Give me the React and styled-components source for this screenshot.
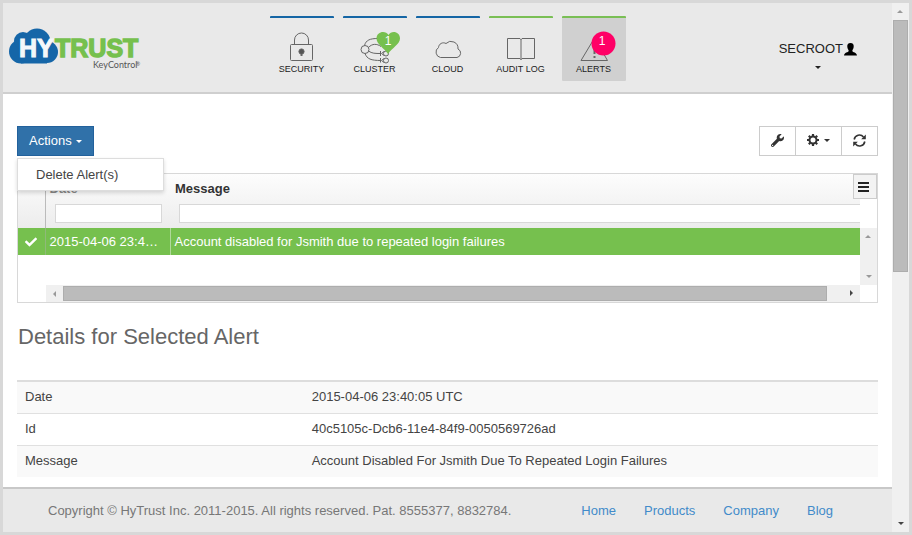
import styled, { createGlobalStyle } from "styled-components";
import { FaCheck, FaWrench } from "react-icons/fa";

const tabs = [
    { label: "SECURITY", color: "#1566a5", Icon: LockIcon },
    { label: "CLUSTER", color: "#1566a5", Icon: ClusterIcon },
    { label: "CLOUD", color: "#1566a5", Icon: CloudIcon },
    { label: "AUDIT LOG", color: "#7abf55", Icon: BookIcon },
    { label: "ALERTS", color: "#7abf55", Icon: AlertIcon, active: true },
];

const details = [
    ["Date", "2015-04-06 23:40:05 UTC"],
    ["Id", "40c5105c-Dcb6-11e4-84f9-0050569726ad"],
    ["Message", "Account Disabled For Jsmith Due To Repeated Login Failures"],
];

const links = ["Home", "Products", "Company", "Blog"];

export default function App(){
    return(
        <>
            <GlobalStyle />
            <Frame>
                <Page>
                    <Header>
                        <Logo />
                        <Nav>
                            {tabs.map(({ label, color, Icon, active }) => (
                                <Tab href="#" key={label} $color={color} $active={active}>
                                    <Icon />
                                    <span>{label}</span>
                                </Tab>
                            ))}
                        </Nav>
                        <UserMenu>
                            <UserName>SECROOT <UserIcon /></UserName>
                            <Caret />
                        </UserMenu>
                    </Header>
                    <Main>
                        <Toolbar>
                            <Dropdown>
                                <ActionsButton>Actions <Caret /></ActionsButton>
                                <Menu>
                                    <MenuItem>Delete Alert(s)</MenuItem>
                                </Menu>
                            </Dropdown>
                            <ButtonGroup>
                                <ToolButton aria-label="Tools"><FaWrench size={13} /></ToolButton>
                                <ToolButton aria-label="Settings"><GearIcon /><Caret /></ToolButton>
                                <ToolButton aria-label="Refresh"><RefreshIcon /></ToolButton>
                            </ButtonGroup>
                        </Toolbar>
                        <AlertsGrid />
                        <Title>Details for Selected Alert</Title>
                        <DetailsTable>
                            <tbody>
                                {details.map(([name, value]) => (
                                    <tr key={name}>
                                        <th scope="row">{name}</th>
                                        <td>{value}</td>
                                    </tr>
                                ))}
                            </tbody>
                        </DetailsTable>
                    </Main>
                    <Footer>
                        <span>Copyright © HyTrust Inc. 2011-2015. All rights reserved. Pat. 8555377, 8832784.</span>
                        <FooterLinks>
                            {links.map((link) => <a href="#" key={link}>{link}</a>)}
                        </FooterLinks>
                    </Footer>
                </Page>
                <PageScroll>
                    <Arrow $dir="up" />
                    <Track><Thumb $size="51%" /></Track>
                    <Arrow $dir="down" $dark />
                </PageScroll>
            </Frame>
        </>
    );
}

function AlertsGrid(){
    return(
        <GridBox>
            <GridBody>
                <GridTable>
                    <thead>
                        <tr>
                            <CheckHead />
                            <DateHead>
                                <label htmlFor="date">Date</label>
                                <Filter id="date" />
                            </DateHead>
                            <MessageHead>
                                <label htmlFor="message">Message</label>
                                <Filter id="message" $open />
                            </MessageHead>
                        </tr>
                    </thead>
                    <tbody>
                        <tr>
                            <CheckCell><FaCheck size={12} /></CheckCell>
                            <Cell>2015-04-06 23:40:05 UTC</Cell>
                            <Cell>Account disabled for Jsmith due to repeated login failures</Cell>
                        </tr>
                    </tbody>
                </GridTable>
                <GridSide>
                    <SideScroll>
                        <Arrow $dir="up" />
                        <Arrow $dir="down" />
                    </SideScroll>
                </GridSide>
            </GridBody>
            <BottomScroll>
                <Arrow $dir="left" />
                <Track $row><Thumb $row $size="98%" /></Track>
                <Arrow $dir="right" $dark />
            </BottomScroll>
            <ColumnsButton aria-label="Columns">
                <svg width="11" height="10" stroke="#222" strokeWidth="2">
                    <path d="M0 1H11M0 5H11M0 9H11" />
                </svg>
            </ColumnsButton>
        </GridBox>
    );
}

function Logo(){
    return(
        <LogoLink href="#" aria-label="HyTrust KeyControl">
            <svg width="134" height="43" viewBox="9 28 134 43">
                <g fill="#1566a8">
                    <circle cx="21" cy="51.5" r="12" />
                    <circle cx="23" cy="41" r="9" />
                    <circle cx="37" cy="42" r="13.5" />
                    <circle cx="47" cy="52" r="11" />
                    <path d="M21 45H47V63.5H21Z" />
                </g>
                <g fontFamily="Liberation Sans, Arial, sans-serif" fontWeight="700" fontSize="25">
                    <text x="19" y="57" fill="#f4f7fa" stroke="#f4f7fa">HY</text>
                    <text x="55" y="57" fill="#76c04e" stroke="#76c04e" strokeWidth="1.4">TRUST</text>
                </g>
                <g fill="#555" fontFamily="Lato, sans-serif">
                    <text x="93" y="68" fontSize="9">KeyControl</text>
                    <text x="136" y="66" fontSize="5">®</text>
                </g>
            </svg>
        </LogoLink>
    );
}

function LockIcon(){
    return(
        <TabIcon viewBox="0 0 64 32">
            <rect x="20.5" y="14.5" width="22" height="16" rx="1" />
            <path d="M24.5 14V10a7 7 0 0 1 14 0v4" />
            <path d="M31.5 19v7" strokeWidth="2" />
            <circle cx="31.5" cy="21.5" r="2.6" fill="#555" />
        </TabIcon>
    );
}

function ClusterIcon(){
    return(
        <TabIcon viewBox="0 0 64 32">
            <circle cx="22" cy="19.5" r="4" />
            <path d="M21.5 15.5C23 10 27 8.5 35 8.5M25.5 17.5C29 13.5 34 13.5 38 16.5M25.5 21C29 23.5 32 23.5 38 23.5M22 23.5C24 29 28 30.5 38 30.5" />
            <path d="M37.5 21V26M37.5 28V32.5M41 21.5L38.5 23.5L41 25.500M41 28.500L38.5 30.5L41 32.500" />
            <circle cx="43" cy="23.5" r="2.500" />
            <circle cx="43" cy="30.5" r="2.500" />
            <path d="M45 24C41 18 33.500 14 33.500 8.500C33.500 1 43 0 45.500 5C48 0 57 1 57 8.500C57 14 49 18 45 24Z" fill="#76c04e" stroke="none" />
            <BadgeText x="45" y="15">1</BadgeText>
        </TabIcon>
    );
}

function CloudIcon(){
    return(
        <TabIcon viewBox="0 0 64 32">
            <path d="M24.5 27.5A5.500 5.500 0 0 1 22.5 17.5A5 5 0 0 1 30 13.5A7 7 0 0 1 42 19A4.500 4.500 0 0 1 41 27.5Z" />
        </TabIcon>
    );
}

function BookIcon(){
    return(
        <TabIcon viewBox="0 0 64 32">
            <path d="M32 9.5L31 8.5H18.5V28.5H31L32 29.5L33 28.5H45.5V8.5H33ZM32 9V30" />
        </TabIcon>
    );
}

function AlertIcon(){
    return(
        <TabIcon viewBox="0 0 64 32">
            <path d="M32.5 8L19 30.5H45.5Z" />
            <path d="M32.5 15V24M32.5 26V28" strokeWidth="2" />
            <circle cx="41.500" cy="13.500" r="12" fill="#ff0066" stroke="none" />
            <BadgeText x="40" y="15">1</BadgeText>
        </TabIcon>
    );
}

function UserIcon(){
    return(
        <svg width="13" height="13" viewBox="0 0 13 13">
            <path d="M6.5 0C8.9 0 9.9 1.5 9.700 3.800C9.600 5.500 9 6.300 8.400 7.200V8.300C8.700 9.300 12.700 9.500 13 12.500H0C.3 9.500 4.300 9.300 4.600 8.300V7.200C4 6.300 3.400 5.500 3.300 3.800C3.100 1.500 4.100 0 6.500 0Z" />
        </svg>
    );
}

function GearIcon(){
    return(
        <svg width="12" height="12" viewBox="0 0 12 12" fill="none" stroke="#333">
            <circle cx="6" cy="6" r="3.500" strokeWidth="2" />
            <path d="M6 0V2M6 10V12M0 6H2M10 6H12M1.800 1.800L3.200 3.200M8.800 8.800L10.200 10.200M1.800 10.200L3.200 8.800M8.800 3.200L10.200 1.800" strokeWidth="2.200" />
        </svg>
    );
}

function RefreshIcon(){
    return(
        <svg width="13" height="13" viewBox="0 0 13 13" fill="none" stroke="#333" strokeWidth="1.600">
            <path d="M1.200 5.500A5.300 5.300 0 0 1 10.500 3M11.800 7.500A5.300 5.300 0 0 1 2.500 10" />
            <path d="M12.800 .5V5.200H8.200ZM.2 12.500V7.800H4.800Z" fill="#333" stroke="none" />
        </svg>
    );
}

const GlobalStyle = createGlobalStyle`
    * {
        box-sizing: border-box;
    }
    body {
        margin: 0;
        font-family: "Liberation Sans", Arial, sans-serif;
        font-size: 13px;
        line-height: 18px;
        color: #444;
    }
    button, input {
        font: inherit;
        color: inherit;
    }
`

const Frame = styled.div`
    display: flex;
    min-height: 100vh;
    border: 3px solid #d8d8d8;
    background: #fff;
`

const Page = styled.div`
    flex: 1;
    min-width: 0;
    display: flex;
    flex-direction: column;
`

const Header = styled.header`
    display: grid;
    grid-template-columns: 1fr auto 1fr;
    align-items: start;
    padding: 13px 6px 11px;
    background: #e9e9e9;
    border-bottom: 2px solid #cfcfcf;
`

const LogoLink = styled.a`
    padding-top: 12px;

    svg {
        display: block;
    }
`

const Nav = styled.nav`
    display: flex;
    gap: 9px;
`

const Tab = styled.a`
    width: 64px;
    padding: 12px 0 5px;
    border-top: 2px solid ${(props) => props.$color};
    background: ${(props) => (props.$active ? "#d0d0d0" : "transparent")};
    border-radius: 1px;
    font-size: 9px;
    line-height: 14px;
    text-align: center;
    text-decoration: none;
    color: #222;
`

const TabIcon = styled.svg`
    display: block;
    width: 64px;
    height: 32px;
    overflow: visible;
    fill: none;
    stroke: #666;
`

const BadgeText = styled.text`
    fill: #fff;
    stroke: none;
    font-size: 12px;
    text-anchor: middle;
`

const UserMenu = styled.button`
    justify-self: end;
    display: flex;
    flex-direction: column;
    align-items: center;
    gap: 8px;
    margin: 24px 29px 0 0;
    padding: 0;
    border: 0;
    background: none;
    color: #222;
`

const UserName = styled.span`
    display: flex;
    align-items: center;
    gap: 1px;

    svg {
        fill: #000;
    }
`

const Caret = styled.i`
    border: 3px solid transparent;
    border-top-color: currentColor;
    border-bottom: 0;
`

const Main = styled.main`
    flex: 1;
    padding: 32px 14px 10px;
`

const Toolbar = styled.div`
    display: flex;
    justify-content: space-between;
    margin-bottom: 17px;
`

const Dropdown = styled.div`
    position: relative;
`

const ActionsButton = styled.button`
    display: flex;
    align-items: center;
    gap: 4px;
    height: 30px;
    padding: 0 11px;
    border: 1px solid #22619c;
    background: #3071a9;
    color: #fff;
`

const Menu = styled.div`
    position: absolute;
    z-index: 2;
    top: 32px;
    left: 0;
    width: 147px;
    border: 1px solid #ddd;
    background: #fff;
    box-shadow: 0 2px 4px rgba(0, 0, 0, 0.15);
`

const MenuItem = styled.button`
    display: block;
    width: 100%;
    height: 31px;
    padding: 0 18px;
    border: 0;
    background: none;
    text-align: left;
`

const ButtonGroup = styled.div`
    display: flex;
`

const ToolButton = styled.button`
    display: flex;
    align-items: center;
    justify-content: center;
    gap: 5px;
    height: 30px;
    padding: 0 11px 2px;
    border: 1px solid #ccc;
    background: #fff;
    color: #333;

    & + & {
        margin-left: -1px;
    }
`

const GridBox = styled.section`
    position: relative;
    border: 1px solid #d8d8d8;
`

const GridBody = styled.div`
    display: flex;
    align-items: flex-start;
`

const GridTable = styled.table`
    flex: 1;
    width: 100%;
    min-width: 0;
    table-layout: fixed;
    border-collapse: collapse;

    thead {
        background: linear-gradient(#fdfdfd, #ececec);
    }
`

const HeadCell = styled.th`
    height: 54px;
    padding: 6px 0 0 5px;
    vertical-align: top;
    text-align: left;
    color: #333;

    label {
        display: block;
    }
`

const CheckHead = styled(HeadCell)`
    width: 27px;
    border-right: 1px solid #bbb;
`

const DateHead = styled(HeadCell)`
    width: 125px;
    padding-left: 4px;
    padding-right: 9px;

    label {
        color: #888;
    }
    input {
        margin-left: 5px;
        width: 107px;
    }
`

const MessageHead = styled(HeadCell)`
    input {
        margin-left: 4px;
        width: calc(100% - 4px);
    }
`

const Filter = styled.input`
    display: block;
    height: 19px;
    margin-top: 6px;
    padding: 0 4px;
    border: 1px solid #d8d8d8;
    border-right-width: ${(props) => (props.$open ? "0" : "1px")};
    background: #fff;
`

const Cell = styled.td`
    height: 27px;
    padding: 0 10px 0 4px;
    overflow: hidden;
    text-overflow: ellipsis;
    white-space: nowrap;
    background: #76c04e;
    color: #fff;

    & + & {
        border-left: 1px solid #b0d99a;
    }
`

const CheckCell = styled(Cell)`
    padding: 0;
    text-align: center;
    border-right: 1px solid #8fb97a;

    svg {
        display: block;
        margin: 0 auto;
    }
`

const GridSide = styled.div`
    flex: none;
    width: 17px;
    padding-top: 54px;
`

const SideScroll = styled.div`
    display: flex;
    flex-direction: column;
    justify-content: space-between;
    align-items: center;
    height: 57px;
    background: #f0f0f0;
`

const BottomScroll = styled.div`
    display: flex;
    align-items: center;
    height: 17px;
    margin: 0 17px 0 28px;
    background: #f0f0f0;
`

const Track = styled.div`
    flex: 1;
    align-self: stretch;
    padding: ${(props) => (props.$row ? "1px 0" : "0 1px")};
`

const Thumb = styled.div`
    width: ${(props) => (props.$row ? props.$size : "100%")};
    height: ${(props) => (props.$row ? "100%" : props.$size)};
    border: 1px solid #adadad;
    background: #bbb;
`

const rotations = { up: "180deg", down: "0deg", left: "90deg", right: "270deg" };

const Arrow = styled.i`
    display: flex;
    align-items: center;
    justify-content: center;
    flex: none;
    width: 17px;
    height: 17px;
    transform: rotate(${(props) => rotations[props.$dir]});

    &::before {
        content: "";
        border: 3px solid transparent;
        border-top-color: ${(props) => (props.$dark ? "#444" : "#999")};
        border-bottom: 0;
    }
`

const PageScroll = styled.div`
    display: flex;
    flex-direction: column;
    align-items: center;
    width: 17px;
    background: #f0f0f0;

    ${Track} {
        width: 100%;
    }
`

const ColumnsButton = styled.button`
    position: absolute;
    top: 0;
    right: 0;
    width: 24px;
    height: 25px;
    padding: 0 0 0 4px;
    border: 1px solid #ccc;
    background: #f3f3f3;

    svg {
        display: block;
    }
`

const Title = styled.h2`
    margin: 20px 0 29px;
    padding-left: 1px;
    font-size: 22px;
    line-height: 28px;
    font-weight: 400;
    color: #666;
`

const DetailsTable = styled.table`
    width: 100%;
    border-collapse: collapse;
    border-top: 2px solid #ddd;

    th, td {
        height: 32px;
        padding: 0 8px;
        font-weight: 400;
        text-align: left;
    }
    th {
        width: 33.3%;
    }
    tr + tr {
        border-top: 1px solid #e0e0e0;
    }
    tr:nth-child(odd) {
        background: #f9f9f9;
    }
`

const Footer = styled.footer`
    display: flex;
    justify-content: space-between;
    align-items: center;
    height: 45px;
    padding: 0 59px 0 45px;
    border-top: 2px solid #c8c8c8;
    background: #e9e9e9;
    color: #777;
`

const FooterLinks = styled.nav`
    display: flex;
    gap: 28px;

    a {
        color: #428bca;
        text-decoration: none;
    }
`
